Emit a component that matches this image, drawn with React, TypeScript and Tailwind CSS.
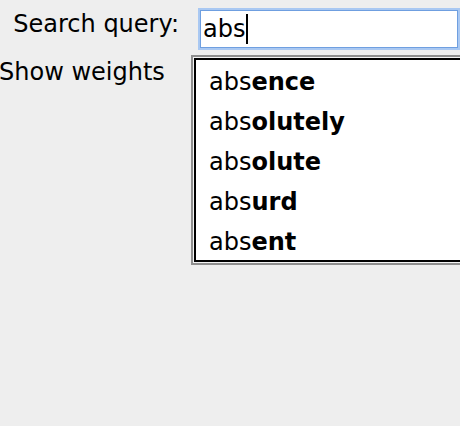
const suggestions = [
  { prefix: 'abs', rest: 'ence' },
  { prefix: 'abs', rest: 'olutely' },
  { prefix: 'abs', rest: 'olute' },
  { prefix: 'abs', rest: 'urd' },
  { prefix: 'abs', rest: 'ent' },
];

export default function App() {
  return (
    <div
      className="h-[426px] w-[460px] overflow-hidden bg-[#eeeeee] text-black"
      style={{ fontFamily: '"DejaVu Sans", "Noto Sans", sans-serif' }}
    >
      {/* search row */}
      <div className="flex h-[55px]">
        <div className="w-[191px] shrink-0 whitespace-nowrap pr-[12px] pt-[8px] text-right text-[24px] leading-[32px]">
          Search query:
        </div>
        <div className="flex-1 pl-[7px] pt-[8px]">
          <div className="h-[42px] border-2 border-[#a9c8f2] bg-white">
            <div className="flex h-full items-center border border-[#6f9fe0] pl-[2px] text-[24px]">
              abs
              <span className="ml-[1px] inline-block h-[30px] w-[2px] bg-black" />
            </div>
          </div>
        </div>
      </div>

      {/* weights row + suggestion popup */}
      <div className="flex">
        <div className="w-[191px] shrink-0 whitespace-nowrap pt-[1px] text-[24px] leading-[32px]">
          <span className="-ml-[1px]">Show weights</span>
        </div>
        <div className="h-[210px] flex-1 border-2 border-r-0 border-[#8e8e8e] bg-[#f4f4f4] py-[1px] pl-[1px]">
          <div className="h-full border-2 border-r-0 border-black bg-white pt-[2px] pl-[13px]">
            {suggestions.map((s) => (
              <div key={s.rest} className="h-[40px] text-[24px] leading-[40px]">
                {s.prefix}
                <span className="font-bold">{s.rest}</span>
              </div>
            ))}
          </div>
        </div>
      </div>
    </div>
  );
}
